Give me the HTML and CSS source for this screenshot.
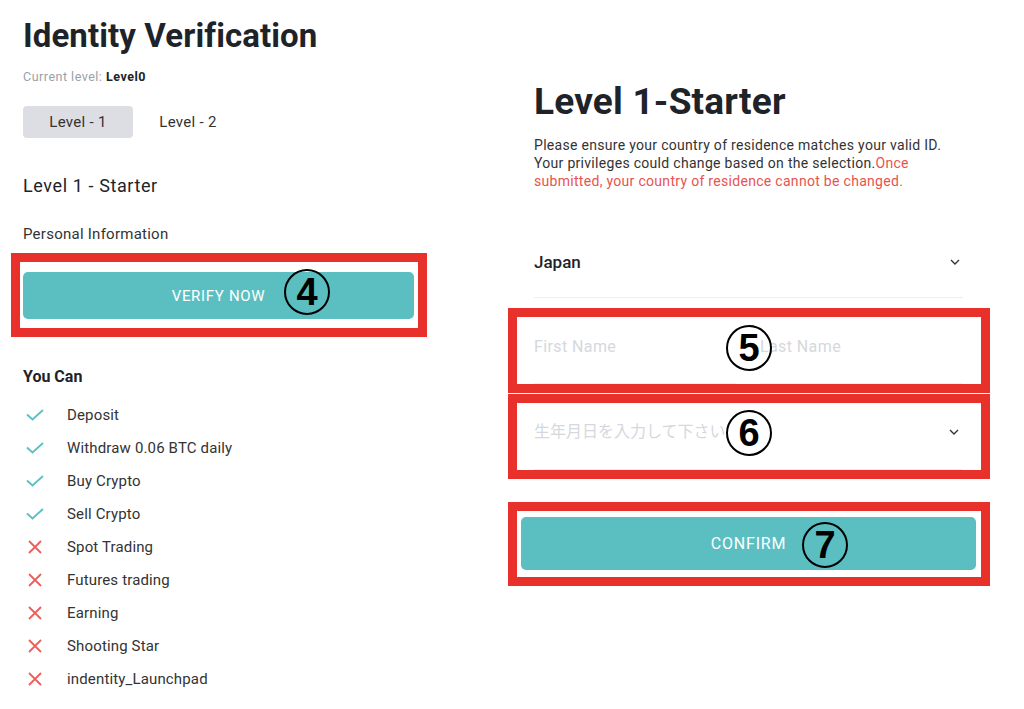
FILE: index.html
```html
<!DOCTYPE html>
<html lang="en">
<head>
<meta charset="utf-8">
<title>Identity Verification</title>
<link rel="stylesheet" href="styles.css">
</head>
<body>
<div class="page">
  <section class="left">
    <h1 class="title">Identity Verification</h1>
    <p class="current">Current level: <b>Level0</b></p>
    <div class="tabs">
      <div class="tab active">Level - 1</div>
      <div class="tab">Level - 2</div>
    </div>
    <h2 class="level-name">Level 1 - Starter</h2>
    <p class="section-label">Personal Information</p>
    <div class="mark mark-verify">
      <button class="btn">VERIFY NOW</button>
      <span class="num num-4">4</span>
    </div>
    <h3 class="can-title">You Can</h3>
    <ul class="perms">
      <li><span class="ico"><svg width="18" height="12" viewBox="0 0 18 12"><path d="M1 5.5 L6.5 10.5 L17 1" fill="none" stroke="#5bbfc1" stroke-width="1.8"/></svg></span>Deposit</li>
      <li><span class="ico"><svg width="18" height="12" viewBox="0 0 18 12"><path d="M1 5.5 L6.5 10.5 L17 1" fill="none" stroke="#5bbfc1" stroke-width="1.8"/></svg></span>Withdraw 0.06 BTC daily</li>
      <li><span class="ico"><svg width="18" height="12" viewBox="0 0 18 12"><path d="M1 5.5 L6.5 10.5 L17 1" fill="none" stroke="#5bbfc1" stroke-width="1.8"/></svg></span>Buy Crypto</li>
      <li><span class="ico"><svg width="18" height="12" viewBox="0 0 18 12"><path d="M1 5.5 L6.5 10.5 L17 1" fill="none" stroke="#5bbfc1" stroke-width="1.8"/></svg></span>Sell Crypto</li>
      <li><span class="ico"><svg width="14" height="14" viewBox="0 0 14 14"><path d="M1 1 L13 13 M13 1 L1 13" fill="none" stroke="#ec5f59" stroke-width="1.8"/></svg></span>Spot Trading</li>
      <li><span class="ico"><svg width="14" height="14" viewBox="0 0 14 14"><path d="M1 1 L13 13 M13 1 L1 13" fill="none" stroke="#ec5f59" stroke-width="1.8"/></svg></span>Futures trading</li>
      <li><span class="ico"><svg width="14" height="14" viewBox="0 0 14 14"><path d="M1 1 L13 13 M13 1 L1 13" fill="none" stroke="#ec5f59" stroke-width="1.8"/></svg></span>Earning</li>
      <li><span class="ico"><svg width="14" height="14" viewBox="0 0 14 14"><path d="M1 1 L13 13 M13 1 L1 13" fill="none" stroke="#ec5f59" stroke-width="1.8"/></svg></span>Shooting Star</li>
      <li><span class="ico"><svg width="14" height="14" viewBox="0 0 14 14"><path d="M1 1 L13 13 M13 1 L1 13" fill="none" stroke="#ec5f59" stroke-width="1.8"/></svg></span>indentity_Launchpad</li>
    </ul>
  </section>

  <section class="right">
    <h1 class="form-title">Level 1-Starter</h1>
    <p class="notice">Please ensure your country of residence matches your valid ID. Your privileges could change based on the selection.<span class="warn">Once submitted, your country of residence cannot be changed.</span></p>
    <div class="select-row">
      <span class="country">Japan</span>
      <svg class="chev" width="10" height="6" viewBox="0 0 10 6"><path d="M1 1 L5 5 L9 1" fill="none" stroke="#333" stroke-width="1.4"/></svg>
    </div>
    <div class="mark mark-names">
      <div class="names">
        <div class="field">First Name</div>
        <div class="field">Last Name</div>
      </div>
      <span class="num num-5">5</span>
    </div>
    <div class="mark mark-birth">
      <div class="field field-select">
        <span>生年月日を入力して下さい</span>
        <svg class="chev" width="10" height="6" viewBox="0 0 10 6"><path d="M1 1 L5 5 L9 1" fill="none" stroke="#333" stroke-width="1.4"/></svg>
      </div>
      <span class="num num-6">6</span>
    </div>
    <div class="mark mark-confirm">
      <button class="btn btn-confirm">CONFIRM</button>
      <span class="num num-7">7</span>
    </div>
  </section>
</div>
</body>
</html>
```

FILE: styles.css
```css
* { box-sizing: border-box; }
html, body { margin: 0; padding: 0; background: #fff; }
body {
  font-family: Roboto, "Noto Sans CJK JP", sans-serif;
  color: #1e2329;
  width: 1024px;
  height: 709px;
  overflow: hidden;
}
.page {
  display: flex;
  align-items: flex-start;
}
.left {
  width: 391px;
  margin-left: 23px;
  padding-top: 16px;
}
.right {
  width: 429px;
  margin-left: 120px;
}
h1, h2, h3, p, ul { margin: 0; padding: 0; font-weight: normal; }

.title {
  font-size: 33px;
  line-height: 40px;
  font-weight: 700;
  color: #1e2329;
  letter-spacing: 0.1px;
}
.current {
  margin-top: 13px;
  font-size: 12.5px;
  line-height: 16px;
  color: #9aa0a8;
  letter-spacing: 0.5px;
}
.current b { color: #1e2329; font-weight: 700; }

.tabs {
  display: flex;
  margin-top: 21px;
}
.tab {
  width: 110px;
  height: 32px;
  line-height: 32px;
  text-align: center;
  font-size: 15px;
  color: #333;
  border-radius: 4px;
  letter-spacing: 0.3px;
}
.tab.active { background: #dcdee3; }

.level-name {
  margin-top: 36px;
  font-size: 18px;
  line-height: 24px;
  color: #1e2329;
  letter-spacing: 0.6px;
}
.section-label {
  margin-top: 26px;
  font-size: 15px;
  line-height: 20px;
  color: #333;
  letter-spacing: 0.25px;
}

.mark {
  position: relative;
  border: 9px solid #e8312a;
}
.mark-verify {
  margin: 9px -13px 0 -12px;
  padding: 10px 4px 9px 3px;
}
.btn {
  display: block;
  width: 100%;
  border: 0;
  border-radius: 5px;
  background: #5bbfc1;
  color: #fff;
  font-family: Roboto, sans-serif;
  font-size: 15px;
  letter-spacing: 0.7px;
  height: 47px;
  padding: 0;
}
.num {
  position: absolute;
  width: 46px;
  height: 46px;
  border: 2px solid #000;
  border-radius: 50%;
  font-family: "Liberation Sans", Arial, sans-serif;
  font-weight: 700;
  font-size: 38px;
  line-height: 43px;
  text-align: center;
  color: #000;
  background: transparent;
}
.num-4 { left: 264px; top: 7px; }
.num-5 { left: 209px; top: 8px; }
.num-6 { left: 209px; top: 7px; }
.num-7 { left: 285px; top: 11px; }

.can-title {
  margin-top: 30px;
  font-size: 16px;
  line-height: 20px;
  font-weight: 700;
  color: #1e2329;
}
.perms {
  list-style: none;
  margin-top: 11px;
}
.perms li {
  display: flex;
  align-items: center;
  height: 33px;
  font-size: 15px;
  color: #333;
  letter-spacing: 0.15px;
}
.ico {
  width: 24px;
  margin-right: 20px;
  display: flex;
  justify-content: center;
  align-items: center;
}
.ico svg { display: block; }

/* right */
.form-title {
  margin-top: 80px;
  font-size: 37px;
  line-height: 44px;
  font-weight: 700;
  color: #1e2329;
  letter-spacing: 0.2px;
}
.notice {
  margin-top: 12px;
  font-size: 14px;
  line-height: 18px;
  color: #333;
  letter-spacing: 0.3px;
}
.warn { color: #e8534f; }

.select-row {
  margin-top: 37px;
  height: 71px;
  display: flex;
  align-items: center;
  justify-content: space-between;
  border-bottom: 1px solid #eceef1;
  padding-right: 3px;
}
.country {
  font-size: 17px;
  line-height: 20px;
  font-weight: 500;
  color: #1e2329;
}
.chev { display: block; }

.mark-names {
  margin: 10px -27px 0 -26px;
  padding: 0 19px 0 17px;
}
.names {
  display: flex;
  gap: 24px;
}
.names .field { flex: 1; }
.field {
  font-size: 16px;
  line-height: 20px;
  color: #d5d8dd;
  padding: 20px 0 26px;
  border-bottom: 1px solid #f0f1f3;
  letter-spacing: 0.4px;
}
.mark-birth {
  margin: 1px -27px 0 -26px;
  padding: 0 19px 0 17px;
}
.field-select {
  display: flex;
  justify-content: space-between;
  align-items: center;
  padding: 19px 3px 27px 0;
  letter-spacing: 0;
}
.mark-confirm {
  margin: 23px -27px 0 -26px;
  padding: 6px 5px 7px 4px;
}
.btn-confirm {
  height: 53px;
  font-size: 16px;
  letter-spacing: 0.8px;
}
```
